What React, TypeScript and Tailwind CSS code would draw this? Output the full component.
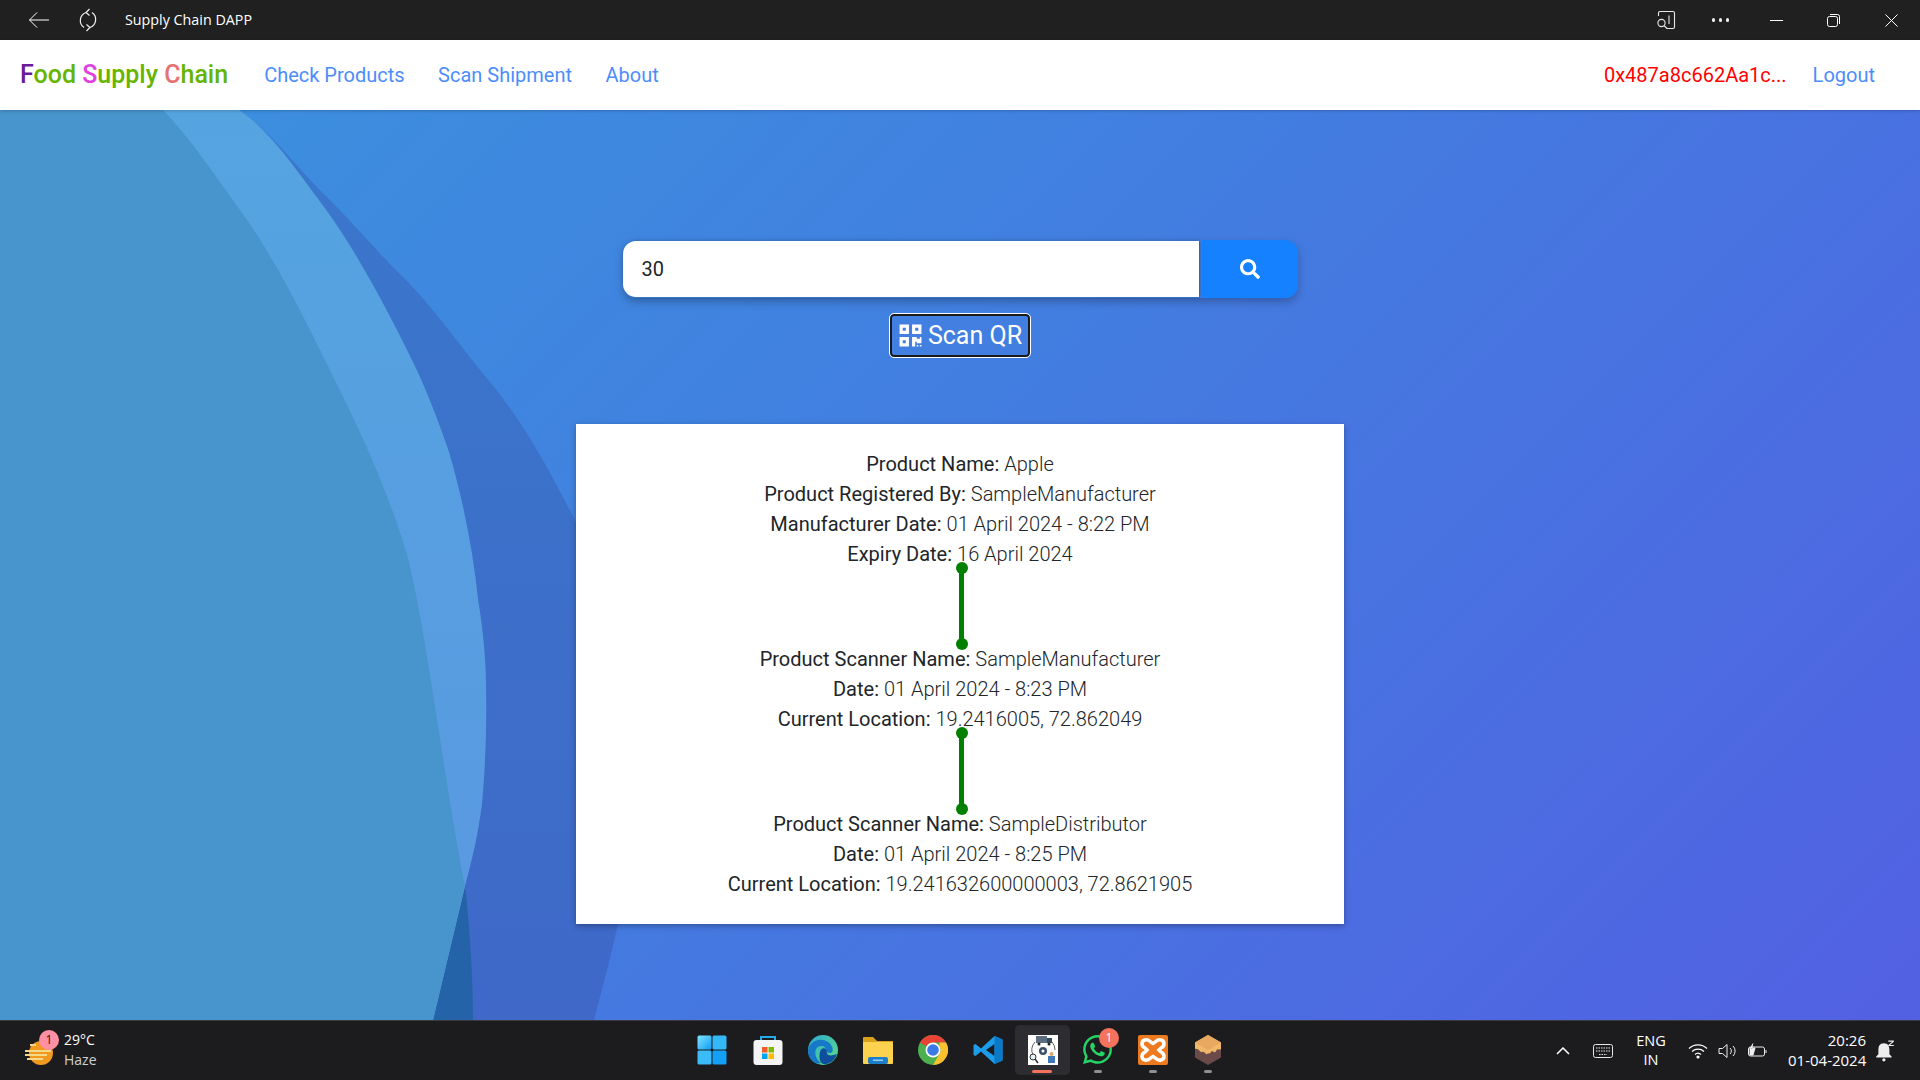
import React from "react";
import { FaQrcode, FaSearch, FaWhatsapp } from "react-icons/fa";

const ROBOTO = "font-['Roboto',sans-serif]";
const SEGOE = "font-['Open_Sans',sans-serif]";

function Background() {
  return (
    <svg className="absolute inset-0 w-full h-full" viewBox="0 110 1920 910" preserveAspectRatio="none">
      <defs>
        <linearGradient id="mid" x1="0" y1="0" x2="0" y2="1">
          <stop offset="0" stopColor="#3a78cc" />
          <stop offset="1" stopColor="#3f68c8" />
        </linearGradient>
        <linearGradient id="light" x1="0" y1="0" x2="0" y2="1">
          <stop offset="0" stopColor="#55a4e0" />
          <stop offset="1" stopColor="#5a98e0" />
        </linearGradient>
      </defs>
      <path fill="url(#mid)" d="M239 110 C 270 130 300 172 327 197 C 355 225 380 255 408 282 C 435 310 465 352 490 382 C 505 400 520 422 531 440 C 548 468 562 495 575 520 C 610 600 640 680 640 760 C 640 820 630 880 618 924 C 610 960 602 990 594 1020 H0 V110 Z" />
      <path fill="#2563a8" d="M465 886 C 470 930 473 980 473 1020 H433 Z" />
      <path fill="url(#light)" d="M163 110 H239 C 270 130 300 175 327 211 C 355 250 385 305 408 352 C 425 385 438 420 449 452 C 463 500 473 550 478 599 C 483 630 486 660 486 687 C 487 730 485 770 482 804 C 478 835 472 860 465 886 L433 1020 H300 Z" />
      <path fill="#4795cc" d="M0 110 H163 C 192 140 218 180 245 217 C 275 260 303 315 327 364 C 360 430 388 490 408 558 C 428 640 447 800 465 886 L433 1020 H0 Z" />
    </svg>
  );
}

function Line({ label, value }: { label: string; value: string }) {
  return (
    <p className="h-[30px] leading-[30px] text-[20px] text-[#212529]">
      <span className="font-normal">{label}: </span>
      <span className="font-light">{value}</span>
    </p>
  );
}

function Connector() {
  return (
    <div className="relative h-[75px] w-full">
      <div className="absolute left-[383px] -top-[1px] bottom-0 w-[5px] bg-[#008000]" />
      <div className="absolute left-[380px] -top-[7px] w-[12px] h-[12px] rounded-full bg-[#008000]" />
      <div className="absolute left-[380px] -bottom-[6px] w-[12px] h-[12px] rounded-full bg-[#008000]" />
    </div>
  );
}

function WinIcon() {
  return (
    <svg className="mr-[2px]" width="30" height="30" viewBox="0 0 30 30">
      <defs>
        <linearGradient id="w" x1="0" y1="0" x2="1" y2="1">
          <stop offset="0" stopColor="#7fe6ff" />
          <stop offset="1" stopColor="#0f9bf5" />
        </linearGradient>
      </defs>
      <rect x="0.5" y="0.5" width="14" height="14" rx="1.5" fill="url(#w)" />
      <rect x="15.5" y="0.5" width="14" height="14" rx="1.5" fill="#35b8f8" />
      <rect x="0.5" y="15.5" width="14" height="14" rx="1.5" fill="#3bbcf8" />
      <rect x="15.5" y="15.5" width="14" height="14" rx="1.5" fill="#14a0f6" />
    </svg>
  );
}

function StoreIcon() {
  return (
    <svg width="30" height="30" viewBox="0 0 30 30">
      <path d="M8 6 V2 H22 V6" fill="none" stroke="#27a8e8" strokeWidth="2" />
      <rect x="0.5" y="5" width="29" height="25" rx="3" fill="#f4f4f4" />
      <rect x="9" y="12" width="5.5" height="5.5" fill="#f05a28" />
      <rect x="15.5" y="12" width="5.5" height="5.5" fill="#7fba00" />
      <rect x="9" y="18.5" width="5.5" height="5.5" fill="#00a4ef" />
      <rect x="15.5" y="18.5" width="5.5" height="5.5" fill="#ffb900" />
    </svg>
  );
}

function EdgeIcon() {
  return (
    <svg width="30" height="30" viewBox="0 0 30 30">
      <defs>
        <linearGradient id="e1" x1="0" y1="0" x2="1" y2="1">
          <stop offset="0" stopColor="#2fa9d8" />
          <stop offset="1" stopColor="#5ce07a" />
        </linearGradient>
      </defs>
      <circle cx="15" cy="15" r="15" fill="url(#e1)" />
      <path d="M0 15 C 2 6 12 2 20 7 C 26 11 26 18 22 18 C 16 18 20 11 13 11 C 6 11 5 22 13 28 C 6 30 0 24 0 15 Z" fill="#1878c8" />
      <path d="M12 17 C 13 12 19 12 19 18 C 19 21 24 21 29 19 C 27 26 20 30 15 29 C 11 27 11 21 12 17 Z" fill="#0d4f9c" />
    </svg>
  );
}

function FolderIcon() {
  return (
    <svg width="30" height="30" viewBox="0 0 30 30">
      <path d="M0 3 Q0 2 1 2 H10 L14 6 H30 V28 H0 Z" fill="#d9a21c" />
      <rect x="0" y="7" width="30" height="22" rx="1" fill="#fdd24e" />
      <rect x="5" y="22" width="20" height="7" rx="2" fill="#1e7fc8" />
      <rect x="10" y="24.5" width="10" height="1.5" fill="#8ed0f5" />
    </svg>
  );
}

function ChromeIcon() {
  return (
    <svg width="30" height="30" viewBox="0 0 30 30">
      <circle cx="15" cy="15" r="15" fill="#4caf50" />
      <path d="M15 0 A15 15 0 0 1 28 7.5 H15 A7.5 7.5 0 0 0 8.5 11.2 L2 7.5 A15 15 0 0 1 15 0 Z" fill="#ea4335" />
      <path d="M28 7.5 A15 15 0 0 1 15 30 L21.5 18.7 A7.5 7.5 0 0 0 21.5 11.2 L21.5 7.5 Z" fill="#fbc02d" />
      <circle cx="15" cy="15" r="7.5" fill="#fff" />
      <circle cx="15" cy="15" r="5.8" fill="#3b78e7" />
    </svg>
  );
}

function VsIcon() {
  return (
    <svg width="30" height="30" viewBox="0 0 30 30">
      <path d="M21.5 1 L29.5 4.5 V25.5 L21.5 29 L8 16.5 L2.5 21 L0.5 20 V10 L2.5 9 L8 13.5 Z" fill="#1c9cea" />
      <path d="M21.5 9 L13 15 L21.5 21 Z" fill="#1c1c1f" />
      <path d="M21.5 1 L29.5 4.5 V25.5 L21.5 29 Z" fill="#0a79c7" />
    </svg>
  );
}

function SupplyIcon() {
  return (
    <svg width="30" height="30" viewBox="0 0 30 30">
      <rect width="30" height="30" fill="#fff" />
      <path d="M5 20 A12 12 0 0 1 7 7" fill="none" stroke="#333" strokeWidth="0.8" />
      <path d="M24 7 A12 12 0 0 1 27 15" fill="none" stroke="#333" strokeWidth="0.8" />
      <rect x="8" y="1" width="11" height="7" fill="#5c6e80" />
      <rect x="19" y="3" width="5" height="5" fill="#36495c" />
      <circle cx="11" cy="9" r="1.5" fill="#222" />
      <circle cx="21" cy="9" r="1.5" fill="#222" />
      <circle cx="15" cy="16" r="4" fill="#3a5068" />
      <circle cx="15" cy="16" r="1.5" fill="#fff" />
      <circle cx="5" cy="22" r="3" fill="#e8f2fa" stroke="#333" />
      <path d="M7 24 L10 28" stroke="#333" strokeWidth="1.5" />
      <rect x="20" y="21" width="7" height="7" fill="#3f79b8" />
      <circle cx="23.5" cy="19" r="2" fill="#d9a86a" />
    </svg>
  );
}

function XamppIcon() {
  return (
    <svg width="30" height="30" viewBox="0 0 30 30">
      <rect width="30" height="30" rx="2" fill="#ee7a1f" />
      <path d="M7 5 C 11 4 12 7 15 8.5 C 18 7 19 4 23 5 C 27 6 27 11 23 13 L 21 15 L 23 17 C 27 19 27 24 23 25 C 19 26 18 23 15 21.5 C 12 23 11 26 7 25 C 3 24 3 19 7 17 L 9 15 L 7 13 C 3 11 3 6 7 5 Z" fill="none" stroke="#fff" strokeWidth="3.5" />
    </svg>
  );
}

function BoxIcon() {
  return (
    <svg width="30" height="30" viewBox="0 0 30 30">
      <path d="M15 0 L28 7.5 V22.5 L15 30 L2 22.5 V7.5 Z" fill="#6b4a4a" />
      <path d="M15 0 L28 7.5 V14 C 26 16 25 12 23 16 C 21 20 20 14 18 17 C 16 20 15 18 15 18 C 13 22 12 15 9 17 C 7 18 6 13 2 14 V7.5 Z" fill="#f0b868" />
      <path d="M15 0 L28 7.5 L15 15 L2 7.5 Z" fill="#e8a860" />
    </svg>
  );
}

function Slot({ children, pill, active }: { children: React.ReactNode; pill?: boolean; active?: boolean }) {
  return (
    <div className={`relative w-[55px] h-[50px] flex items-center justify-center rounded-[5px] ${active ? "bg-[#2d2d31]" : ""}`}>
      {children}
      {active && <div className="absolute bottom-[2px] left-[17px] w-[20px] h-[3px] rounded-full bg-[#f5725c]" />}
      {pill && <div className="absolute bottom-[2px] left-[24px] w-[8px] h-[3px] rounded-full bg-[#8e8e93]" />}
    </div>
  );
}

export default function App() {
  return (
    <div className={`w-[1920px] h-[1080px] flex flex-col overflow-hidden ${ROBOTO}`}>
      {/* Window title bar */}
      <div className="h-[40px] shrink-0 bg-[#202020] flex items-center text-white">
        <div className="ml-[28px] w-[22px] flex justify-center">
          <svg width="22" height="18" viewBox="0 0 22 18" fill="none" stroke="#fff" strokeWidth="1">
            <path d="M21 9 H1.5 M9 1.5 L1.5 9 L9 16.5" />
          </svg>
        </div>
        <div className="ml-[27px] w-[22px] flex justify-center">
          <svg width="20" height="24" viewBox="0 0 20 24" fill="none" stroke="#f0f0f0" strokeWidth="1.2">
            <path d="M8 4.5 A8.5 8.5 0 0 0 6 19.5 M12 19.5 A8.5 8.5 0 0 0 14 4.5 M11.5 1 L8 4.5 L11.5 7.5 M8.5 16.5 L12 19.5 L8.5 23" />
          </svg>
        </div>
        <span className={`ml-[26px] text-[14.3px] leading-[20px] ${SEGOE}`}>Supply Chain DAPP</span>
        <div className="ml-auto flex items-center">
          <svg width="20" height="20" viewBox="0 0 20 20" fill="none" stroke="#e8e8e8" strokeWidth="1.1">
            <path d="M2.5 6 V3 Q2.5 1.5 4 1.5 H17 Q18.5 1.5 18.5 3 V17 Q18.5 18.5 17 18.5 H10.5 M13 5.5 V14" />
            <circle cx="5.5" cy="13" r="3.6" />
            <path d="M8 15.5 L11 18.5" />
          </svg>
          <div className="ml-[36px] flex gap-[3.5px]">
            <div className="w-[3.5px] h-[3.5px] rounded-full bg-[#eee]" />
            <div className="w-[3.5px] h-[3.5px] rounded-full bg-[#eee]" />
            <div className="w-[3.5px] h-[3.5px] rounded-full bg-[#eee]" />
          </div>
          <div className="ml-[41px] w-[13px] h-[1px] bg-white" />
          <svg className="ml-[44px]" width="13" height="13" viewBox="0 0 13 13" fill="none" stroke="#fff" strokeWidth="1">
            <rect x="0.5" y="2.5" width="10" height="10" rx="2" />
            <path d="M3 0.5 H10.5 Q12.5 0.5 12.5 2.5 V10" />
          </svg>
          <svg className="ml-[45px] mr-[22px]" width="13" height="13" viewBox="0 0 13 13" fill="none" stroke="#fff" strokeWidth="1">
            <path d="M0.5 0.5 L12.5 12.5 M12.5 0.5 L0.5 12.5" />
          </svg>
        </div>
      </div>

      {/* App nav */}
      <nav className="relative z-10 h-[70px] shrink-0 bg-white flex items-center pl-[20px] pr-[45px] text-[20px] shadow-[0_1px_3px_rgba(0,0,0,0.2)]">
        <span className="text-[25px] font-medium text-[#66b500]">
          <span className="text-[#6a1b9a]">F</span>ood <span className="text-[#e040e0]">S</span>upply <span className="text-[#e57373]">C</span>hain
        </span>
        <div className="ml-[36px] flex gap-[33.5px] text-[#4d8dfb]">
          <span>Check Products</span>
          <span>Scan Shipment</span>
          <span>About</span>
        </div>
        <span className="ml-auto text-[#ff0000]">0x487a8c662Aa1c...</span>
        <span className="ml-[26px] text-[#4d8dfb]">Logout</span>
      </nav>

      {/* Main */}
      <main className="relative flex-1 min-h-0 overflow-hidden bg-[linear-gradient(135deg,#3b92de_0%,#4180e0_40%,#5260e2_100%)]">
        <Background />
        <div className="relative flex flex-col items-center pt-[130px]">
          <div className="w-[675px] h-[58px] flex items-center rounded-[13px] shadow-[0_4px_8px_rgba(0,0,0,0.25)]">
            <input
              readOnly
              value="30"
              className="w-[576px] h-[56px] bg-white rounded-l-[13px] pl-[19px] text-[20px] text-[#212529] outline-none shadow-[1px_0_3px_rgba(0,0,0,0.3)]"
            />
            <button className="ml-[3px] w-[96px] h-[58px] bg-[#1581ff] rounded-r-[13px] flex items-center justify-center text-white">
              <FaSearch size={20} />
            </button>
          </div>
          <button className="mt-[16px] h-[43px] w-[140px] flex items-center justify-center gap-[5px] rounded-[4px] border-2 border-[#1a1a1a] outline outline-1 outline-white text-white text-[25px]">
            <FaQrcode size={25} />
            <span>Scan QR</span>
          </button>
          <div className="mt-[67px] w-[768px] h-[500px] bg-white py-[25px] text-center shadow-[0_2px_6px_rgba(0,0,0,0.3)]">
            <Line label="Product Name" value="Apple" />
            <Line label="Product Registered By" value="SampleManufacturer" />
            <Line label="Manufacturer Date" value="01 April 2024 - 8:22 PM" />
            <Line label="Expiry Date" value="16 April 2024" />
            <Connector />
            <Line label="Product Scanner Name" value="SampleManufacturer" />
            <Line label="Date" value="01 April 2024 - 8:23 PM" />
            <Line label="Current Location" value="19.2416005, 72.862049" />
            <Connector />
            <Line label="Product Scanner Name" value="SampleDistributor" />
            <Line label="Date" value="01 April 2024 - 8:25 PM" />
            <Line label="Current Location" value="19.241632600000003, 72.8621905" />
          </div>
        </div>
      </main>

      {/* Windows taskbar */}
      <footer className={`h-[60px] shrink-0 bg-[#1c1c1f] border-t border-[#3a3a3e] grid grid-cols-[1fr_auto_1fr] items-center text-white ${SEGOE}`}>
        <div className="flex items-center pl-[25px]">
          <div className="relative w-[30px] h-[30px]">
            <svg width="30" height="30" viewBox="0 0 30 30">
              <circle cx="16" cy="17" r="12" fill="#f29a1f" />
              <path d="M5 9 H11 M0 15 H26 M0 19 H22 M2 23 H18" stroke="#f5d98a" strokeWidth="2" />
            </svg>
            <div className="absolute -top-[6px] left-[14px] w-[20px] h-[20px] rounded-full bg-[#ff8fa3] text-[#1a1a1a] text-[12px] leading-[20px] text-center">1</div>
          </div>
          <div className="ml-[9px] pb-[2px] text-[14px] leading-[20px]">
            <div>29°C</div>
            <div className="text-[#cfcfcf]">Haze</div>
          </div>
        </div>

        <div className="flex items-center pb-[2px]">
          <Slot><WinIcon /></Slot>
          <Slot><StoreIcon /></Slot>
          <Slot><EdgeIcon /></Slot>
          <Slot><FolderIcon /></Slot>
          <Slot><ChromeIcon /></Slot>
          <Slot><VsIcon /></Slot>
          <Slot active><SupplyIcon /></Slot>
          <Slot pill>
            <FaWhatsapp size={33} color="#25d366" />
            <div className="absolute top-[3px] left-[29px] w-[20px] h-[20px] rounded-full bg-[#f5725c] text-white text-[12px] leading-[20px] text-center">1</div>
          </Slot>
          <Slot pill><XamppIcon /></Slot>
          <Slot pill><BoxIcon /></Slot>
        </div>

        <div className="flex items-center justify-end pr-[25px] text-[14.5px]">
          <svg width="14" height="8" viewBox="0 0 14 8" fill="none" stroke="#fff" strokeWidth="1.5">
            <path d="M1 7 L7 1 L13 7" />
          </svg>
          <svg className="ml-[23px]" width="20" height="14" viewBox="0 0 20 14" fill="none" stroke="#e8e8e8" strokeWidth="1">
            <rect x="0.5" y="0.5" width="19" height="13" rx="2" />
            <path d="M3 4 H17 M3 7 H17 M6 10.5 H14" strokeDasharray="1.5 1" />
          </svg>
          <div className="ml-[20px] w-[36px] text-center leading-[19px] pb-[1px]">
            <div>ENG</div>
            <div>IN</div>
          </div>
          <svg className="ml-[19px]" width="20" height="16" viewBox="0 0 20 16" fill="none" stroke="#fff" strokeWidth="1.2">
            <path d="M1 5.5 A13 13 0 0 1 19 5.5 M4 8.5 A9 9 0 0 1 16 8.5 M7 11.5 A4.5 4.5 0 0 1 13 11.5" />
            <circle cx="10" cy="14" r="1" fill="#fff" />
          </svg>
          <svg className="ml-[10px]" width="20" height="16" viewBox="0 0 20 16" fill="none" stroke="#eee" strokeWidth="1">
            <path d="M1 5.5 H4.5 L9 1.5 V14.5 L4.5 10.5 H1 Z M12 5 A4 4 0 0 1 12 11 M15 3 A7 7 0 0 1 15 13" />
          </svg>
          <svg className="ml-[10px]" width="20" height="16" viewBox="0 0 20 16" fill="none" stroke="#eee" strokeWidth="1">
            <rect x="0.5" y="4" width="16" height="9" rx="2" />
            <path d="M18 7 V10" />
            <path d="M2 5 H7 L5 12 H2 Z M5 0.5 L2 6 H6 L4 9" fill="#eee" />
          </svg>
          <div className="ml-[20px] w-[78px] text-right text-[15px] leading-[20px] whitespace-nowrap pb-[2px]">
            <div>20:26</div>
            <div>01-04-2024</div>
          </div>
          <svg className="ml-[9px]" width="20" height="22" viewBox="0 0 18 20" fill="#eee">
            <path d="M8 3 C 4 3 3 6 3 9 V13 L1 15 V16 H15 V15 L13 13 V9 C 13 6 12 3 8 3 Z" />
            <circle cx="8" cy="18" r="1.5" />
            <path d="M12 0.5 H17 V1.5 L13.5 4.5 H17 V5.5 H12 V4.5 L15.5 1.5 H12 Z" />
          </svg>
        </div>
      </footer>
    </div>
  );
}
